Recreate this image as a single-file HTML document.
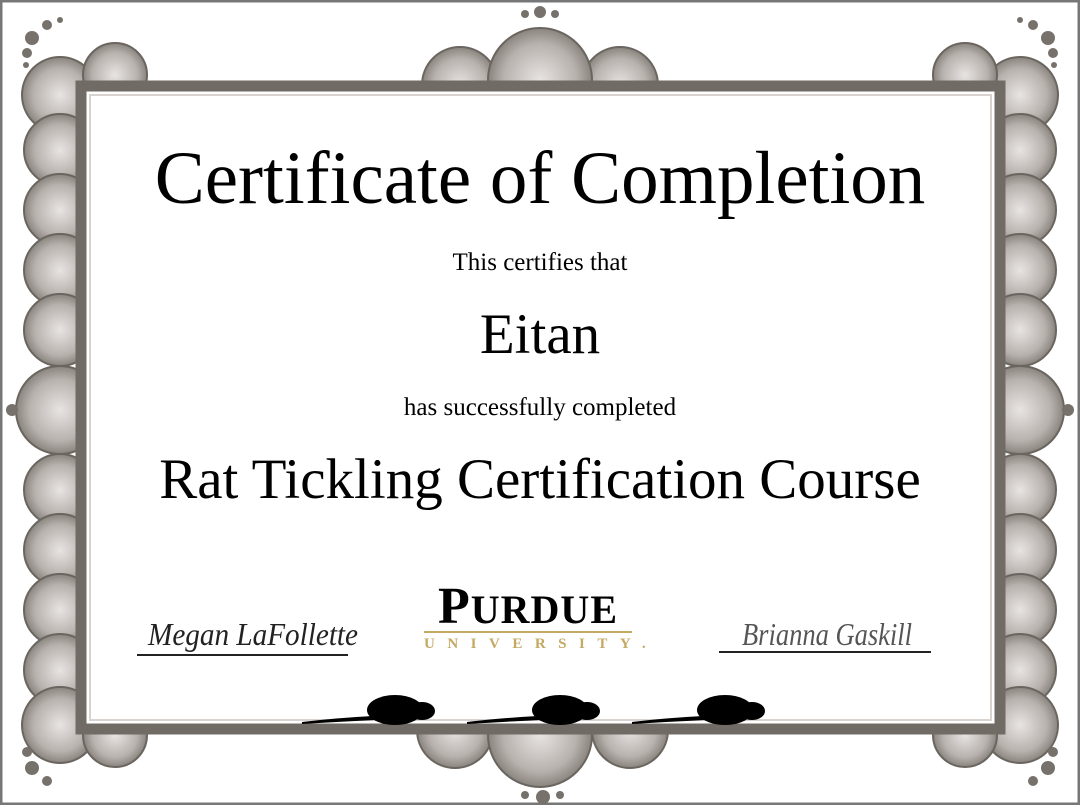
<!DOCTYPE html><html><head><style>
body{margin:0;width:1080px;height:805px;overflow:hidden;background:#fff;font-family:"Liberation Serif",serif;}
.t{position:absolute;left:0;width:1080px;text-align:center;color:#000;white-space:nowrap}
</style></head><body>
<svg width="1080" height="805" style="position:absolute;left:0;top:0">
<defs>
<radialGradient id="g" cx="50%" cy="50%" r="50%"><stop offset="0" stop-color="#e8e4e2"/><stop offset="0.7" stop-color="#b8b2ae"/><stop offset="1" stop-color="#8a847f"/></radialGradient>
</defs>
<rect x="1" y="1" width="1078" height="803" fill="none" stroke="#777" stroke-width="3"/>
<g fill="url(#g)" stroke="#6b6560" stroke-width="2">
<circle cx="60" cy="95" r="38"/><circle cx="60" cy="150" r="36"/><circle cx="60" cy="210" r="36"/><circle cx="60" cy="270" r="36"/><circle cx="60" cy="330" r="36"/><circle cx="60" cy="410" r="44"/><circle cx="60" cy="490" r="36"/><circle cx="60" cy="550" r="36"/><circle cx="60" cy="610" r="36"/><circle cx="60" cy="670" r="36"/><circle cx="60" cy="725" r="38"/>
<circle cx="1020" cy="95" r="38"/><circle cx="1020" cy="150" r="36"/><circle cx="1020" cy="210" r="36"/><circle cx="1020" cy="270" r="36"/><circle cx="1020" cy="330" r="36"/><circle cx="1020" cy="410" r="44"/><circle cx="1020" cy="490" r="36"/><circle cx="1020" cy="550" r="36"/><circle cx="1020" cy="610" r="36"/><circle cx="1020" cy="670" r="36"/><circle cx="1020" cy="725" r="38"/>
<circle cx="115" cy="75" r="32"/><circle cx="965" cy="75" r="32"/>
<circle cx="460" cy="85" r="38"/><circle cx="620" cy="85" r="38"/><circle cx="540" cy="80" r="52"/>
<circle cx="115" cy="735" r="32"/><circle cx="965" cy="735" r="32"/>
<circle cx="455" cy="730" r="38"/><circle cx="630" cy="730" r="38"/><circle cx="540" cy="735" r="52"/>
</g>
<g fill="#77716c">
<circle cx="32" cy="38" r="7"/><circle cx="47" cy="25" r="5"/><circle cx="60" cy="20" r="3"/><circle cx="27" cy="53" r="5"/><circle cx="26" cy="65" r="3"/>
<circle cx="1048" cy="38" r="7"/><circle cx="1033" cy="25" r="5"/><circle cx="1020" cy="20" r="3"/><circle cx="1053" cy="53" r="5"/><circle cx="1054" cy="65" r="3"/>
<circle cx="32" cy="768" r="7"/><circle cx="47" cy="781" r="5"/><circle cx="27" cy="752" r="5"/>
<circle cx="1048" cy="768" r="7"/><circle cx="1033" cy="781" r="5"/><circle cx="1053" cy="752" r="5"/>
<circle cx="540" cy="12" r="6"/><circle cx="525" cy="14" r="4"/><circle cx="555" cy="14" r="4"/>
<circle cx="543" cy="797" r="7"/><circle cx="525" cy="795" r="4"/><circle cx="560" cy="795" r="4"/>
<circle cx="12" cy="410" r="6"/><circle cx="1068" cy="410" r="6"/>
</g>
<rect x="81" y="86" width="919" height="643" fill="#fff" stroke="#716b66" stroke-width="11"/>
<rect x="90" y="95" width="901" height="625" fill="#fff" stroke="#d8d3cf" stroke-width="2"/>
<line x1="137" y1="655" x2="348" y2="655" stroke="#222" stroke-width="2"/>
<line x1="719" y1="652" x2="931" y2="652" stroke="#222" stroke-width="2"/>
<text x="148" y="645" font-family="Liberation Serif" font-style="italic" font-size="32" fill="#222" textLength="210" lengthAdjust="spacingAndGlyphs">Megan LaFollette</text>
<text x="742" y="645" font-family="Liberation Serif" font-style="italic" font-size="32" fill="#555" textLength="170" lengthAdjust="spacingAndGlyphs">Brianna Gaskill</text>
<line x1="424" y1="632" x2="632" y2="632" stroke="#c4a962" stroke-width="2"/>
<g fill="#000">
<g transform="translate(395,710)"><ellipse cx="0" cy="0" rx="28" ry="15"/><ellipse cx="27" cy="1" rx="13" ry="9"/><path d="M-22 6 Q-60 8 -93 12 L-93 14 Q-60 12 -20 10Z"/></g>
<g transform="translate(560,710)"><ellipse cx="0" cy="0" rx="28" ry="15"/><ellipse cx="27" cy="1" rx="13" ry="9"/><path d="M-22 6 Q-60 8 -93 12 L-93 14 Q-60 12 -20 10Z"/></g>
<g transform="translate(725,710)"><ellipse cx="0" cy="0" rx="28" ry="15"/><ellipse cx="27" cy="1" rx="13" ry="9"/><path d="M-22 6 Q-60 8 -93 12 L-93 14 Q-60 12 -20 10Z"/></g>
</g>
</svg>
<div class="t" style="top:136px;font-size:75px;">Certificate of Completion</div>
<div class="t" style="top:249px;font-size:25px;">This certifies that</div>
<div class="t" style="top:302px;font-size:57px;">Eitan</div>
<div class="t" style="top:394px;font-size:25px;">has successfully completed</div>
<div class="t" style="top:447px;font-size:57px;">Rat Tickling Certification Course</div>
<div style="position:absolute;left:422px;top:582px;width:212px;text-align:center;font-size:52px;font-weight:bold;line-height:50px;letter-spacing:1px">P<span style="font-size:40px">URDUE</span></div>
<div style="position:absolute;left:424px;top:636px;width:225px;font-size:15px;font-weight:bold;color:#c4a962;letter-spacing:12.5px;line-height:16px">UNIVERSITY.</div>
</body></html>
